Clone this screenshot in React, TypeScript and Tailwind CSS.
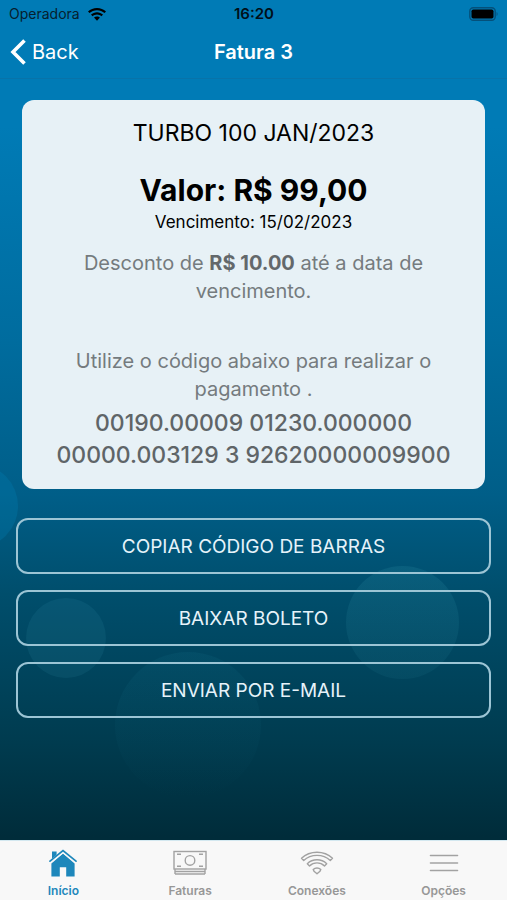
import React from "react";

type Tab = { label: string; icon: React.ReactNode; active?: boolean };

const HouseIcon = () => (
  <svg width="28" height="28" viewBox="0 0 28 28" aria-hidden="true">
    <path d="M3 2.500h4.600v4L3 10z" fill="#1d87bb" />
    <path d="M14 4.600 2.400 14.400v13.200h8.400v-9.400h6.400v9.400h8.400V14.400z" fill="#1d87bb" />
    <path d="M.8 13.200 14 2.600l13.200 10.600" fill="none" stroke="#f8f8f8" strokeWidth="3" />
    <path d="M1 12.200 14 1.600l13 10.600" fill="none" stroke="#1d87bb" strokeWidth="1.700" strokeLinecap="round" />
  </svg>
);

const CashIcon = () => (
  <svg width="34" height="26" viewBox="0 0 34 26" fill="none" stroke="#a2a2a2" strokeWidth="1.400" aria-hidden="true">
    <rect x="1" y="1.500" width="32" height="17.500" />
    <circle cx="17" cy="10.400" r="4.800" />
    <path d="M4 4.300h4M26 4.300h4M4 16.200h4M26 16.200h4" />
    <path d="M2 21.500h30M2 24h30M2 19v5M32 19v5" />
  </svg>
);

const WifiOutlineIcon = () => (
  <svg width="34" height="26" viewBox="0 0 34 26" fill="none" stroke="#a2a2a2" strokeWidth="1.400" strokeLinejoin="round" aria-hidden="true">
    <path d="M1.500 8.300C10 .2 24 .2 32.500 8.300L30.300 10.500C23 3.700 11 3.700 3.700 10.500Z" />
    <path d="M7.300 13.700C12.600 8.500 21.400 8.500 26.700 13.700L24.500 15.900C20.400 11.900 13.600 11.900 9.500 15.900Z" />
    <path d="M13.200 19.400C15.200 17.500 18.800 17.500 20.800 19.400L20 21.200 17 23.800 14 21.200Z" />
  </svg>
);

const MenuIcon = () => (
  <svg width="30" height="20" viewBox="0 0 30 20" stroke="#a2a2a2" strokeWidth="1.600" strokeLinecap="round" aria-hidden="true">
    <path d="M1.500 2.500h27M1.500 10h27M1.500 17.500h27" />
  </svg>
);

const tabs: Tab[] = [
  { label: "Início", icon: <HouseIcon />, active: true },
  { label: "Faturas", icon: <CashIcon /> },
  { label: "Conexões", icon: <WifiOutlineIcon /> },
  { label: "Opções", icon: <MenuIcon /> },
];

const actions = ["COPIAR CÓDIGO DE BARRAS", "BAIXAR BOLETO", "ENVIAR POR E-MAIL"];

function StatusBar() {
  return (
    <div className="grid h-7 grid-cols-3 items-center pr-2 pl-[9px] text-sm text-[#06202e]">
      <div className="flex items-center gap-2">
        <span>Operadora</span>
        <svg width="18" height="13" viewBox="0 0 18 13" aria-hidden="true">
          <path d="M9 0C5.500 0 2.400 1.300 0 3.500l1.500 1.600C3.500 3.200 6.100 2.200 9 2.200s5.500 1 7.500 2.900L18 3.500C15.600 1.300 12.500 0 9 0z" />
          <path d="M9 4.200c-2.300 0-4.400.9-6 2.400l1.500 1.600C5.700 7.100 7.300 6.400 9 6.400s3.300.7 4.500 1.800L15 6.600c-1.600-1.500-3.700-2.400-6-2.400z" />
          <path d="M9 8.400c-1.200 0-2.200.5-3 1.200L9 12.800l3-3.200c-.8-.7-1.800-1.200-3-1.200z" />
        </svg>
      </div>
      <span className="text-center text-[15px] font-semibold text-[#001019]">16:20</span>
      <svg className="justify-self-end" width="30" height="14" viewBox="0 0 30 14" aria-hidden="true">
        <rect x=".8" y=".8" width="25.400" height="12.400" rx="3.500" fill="none" stroke="#04507a" strokeWidth="1.400" />
        <rect x="2.500" y="2.500" width="22" height="9" rx="1.800" />
        <path d="M27.600 5v4c1.300-.5 1.300-3.500 0-4z" fill="#04507a" />
      </svg>
    </div>
  );
}

export default function App() {
  return (
    <div className="relative isolate flex min-h-screen flex-col overflow-hidden bg-[linear-gradient(180deg,#007bb6_0%,#007bb6_14%,#006c9e_38%,#005e88_55%,#004e6c_66%,#003c50_82%,#002c3a_93%)] font-['Inter','Liberation_Sans',sans-serif]">
      <div className="absolute top-[464px] -left-[66px] -z-10 size-[84px] rounded-full bg-[#0080b4]/30" />
      <div className="absolute top-[598px] left-[26px] -z-10 size-[80px] rounded-full bg-[#3aa0b4]/12" />
      <div className="absolute top-[566px] right-[48px] -z-10 size-[113px] rounded-full bg-linear-to-b from-[#3aa0b4]/16 to-[#3aa0b4]/8" />
      <div className="absolute top-[652px] left-[115px] -z-10 size-[146px] rounded-full bg-linear-to-b from-[#1c8098]/12 to-transparent" />

      <StatusBar />
      <header className="grid h-[51px] grid-cols-3 items-center border-b border-[#0873a9] px-2.5 pb-0.5 text-white">
        <button type="button" className="flex items-center gap-1.5 text-xl">
          <svg width="16" height="26" viewBox="0 0 16 26" fill="none" stroke="currentColor" strokeWidth="3.600" aria-hidden="true">
            <path d="M14.500 1.500 3 13l11.500 11.500" />
          </svg>
          Back
        </button>
        <h1 className="text-center text-xl font-semibold">Fatura 3</h1>
      </header>

      <main className="flex-1 px-4 pt-[21px] pb-8">
        <section className="mx-1.5 rounded-xl bg-[#e7f1f6] px-6 pt-4 pb-[18px] text-center">
          <h2 className="text-[23px] leading-[34px] text-black">TURBO 100 JAN/2023</h2>
          <p className="mt-5 text-[30px] leading-10 font-bold text-black">Valor: R$ 99,00</p>
          <p className="text-[17px] leading-6 text-black">Vencimento: 15/02/2023</p>
          <p className="mt-[15px] px-5 text-xl leading-7 text-[#757b7e]">
            Desconto de <strong className="font-bold text-[#63686b]">R$ 10.00</strong> até a data de vencimento.
          </p>
          <p className="mt-[42px] px-5 text-xl leading-7 text-[#757b7e]">
            Utilize o código abaixo para realizar o pagamento .
          </p>
          <p className="mt-1 text-[23px] leading-8 font-medium text-[#5f6568]">
            00190.00009 01230.000000
            <br />
            00000.003129 3 92620000009900
          </p>
        </section>

        <div className="mt-[29px] flex flex-col gap-4">
          {actions.map((label) => (
            <button key={label} type="button" className="h-14 rounded-xl border-2 border-[#9cc5d5] pt-0.5 text-[19px] text-[#e6f3fa]">
              {label}
            </button>
          ))}
        </div>
      </main>

      <nav className="grid h-[60px] grid-cols-4 border-t border-[#d3e8f0] bg-[#f8f8f8]">
        {tabs.map((tab) => (
          <a
            key={tab.label}
            href="#"
            aria-current={tab.active ? "page" : undefined}
            className={`flex flex-col items-center pt-[7px] text-xs leading-4 font-semibold ${tab.active ? "text-[#1d87bb]" : "text-[#979797]"}`}
          >
            <span className="flex h-[30px] items-center">{tab.icon}</span>
            <span className="mt-[5px]">{tab.label}</span>
          </a>
        ))}
      </nav>
    </div>
  );
}
